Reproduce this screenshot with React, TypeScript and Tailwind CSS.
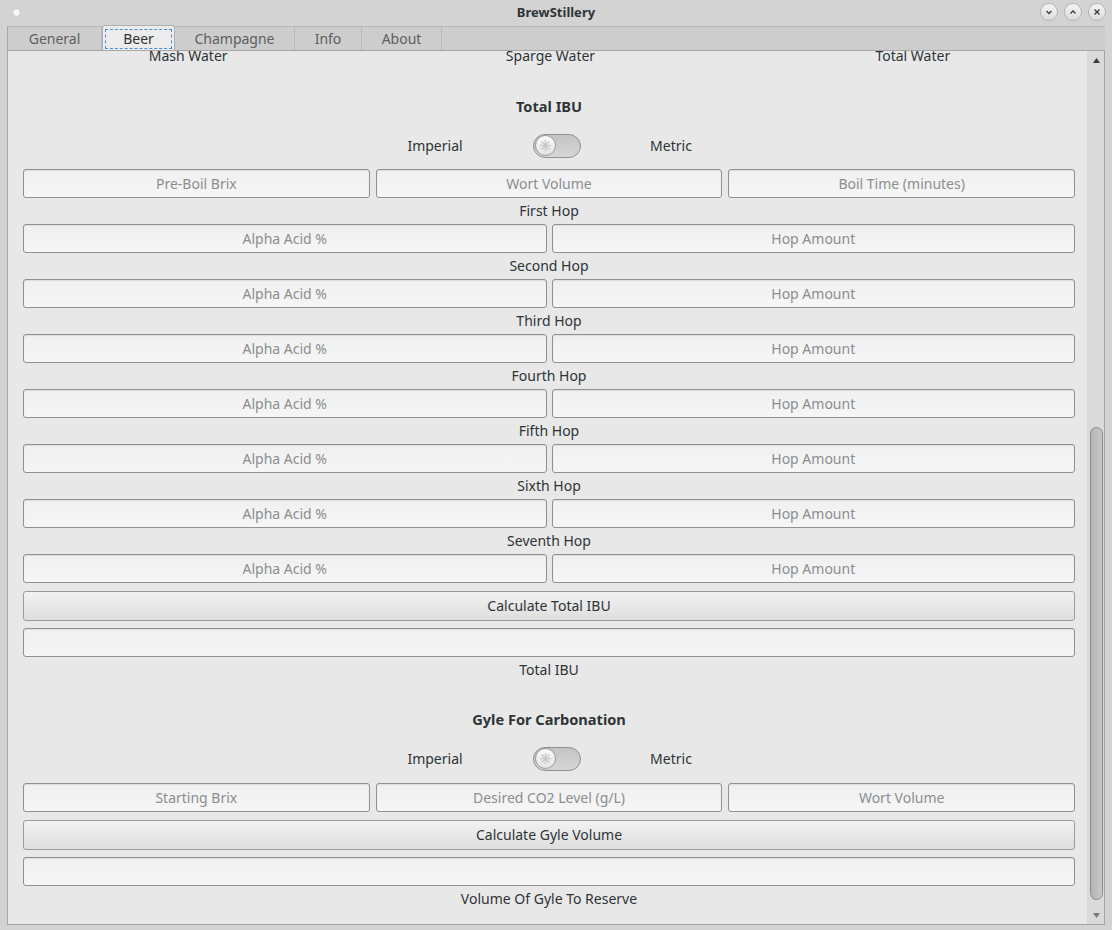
import React from "react";

const hops = ["First", "Second", "Third", "Fourth", "Fifth", "Sixth", "Seventh"];

function Entry({ placeholder }: { placeholder?: string }) {
  return (
    <div className="flex h-[29px] flex-1 items-center justify-center rounded-[3px] border border-[#8f9191] bg-gradient-to-b from-[#f0f0f0] to-[#f6f6f6] text-[14px] text-[#8b8e8f] shadow-[inset_0_1px_1px_rgba(0,0,0,0.08)]">
      {placeholder}
    </div>
  );
}

function Button({ label }: { label: string }) {
  return (
    <div className="flex h-[30px] items-center justify-center rounded-[3px] border border-[#9a9c9c] bg-gradient-to-b from-[#f2f2f2] to-[#dedede] text-[14px] text-[#2e3436]">
      {label}
    </div>
  );
}

function Switch() {
  return (
    <div className="flex h-[24px] w-[48px] items-center rounded-full border border-[#8f9191] bg-gradient-to-b from-[#c4c4c4] to-[#d6d6d6] px-[1px]">
      <div className="flex h-[21px] w-[21px] items-center justify-center rounded-full border border-[#9a9a9a] bg-gradient-to-b from-[#fafafa] to-[#e4e4e4]">
        <svg width="13" height="13" viewBox="0 0 13 13" stroke="#c8c8c8" strokeWidth="1.4">
          <line x1="6.5" y1="1" x2="6.5" y2="12" />
          <line x1="1" y1="6.5" x2="12" y2="6.5" />
          <line x1="2.6" y1="2.6" x2="10.4" y2="10.4" />
          <line x1="10.4" y1="2.6" x2="2.6" y2="10.4" />
        </svg>
      </div>
    </div>
  );
}

function UnitRow() {
  return (
    <div className="ml-[362px] flex h-[24px] items-center text-[14px] text-[#2e3436]">
      <span className="w-[100px] text-center">Imperial</span>
      <div className="ml-[48px]">
        <Switch />
      </div>
      <span className="ml-[40px] w-[100px] text-center">Metric</span>
    </div>
  );
}

function WinButton({ children }: { children: React.ReactNode }) {
  return (
    <div className="flex h-[18px] w-[18px] items-center justify-center rounded-full border border-[#b4b4b4] bg-gradient-to-b from-[#f4f4f4] to-[#dcdcdc]">
      {children}
    </div>
  );
}

export default function App() {
  const tabs = [
    { label: "General", w: 94 },
    { label: "Beer", w: 73 },
    { label: "Champagne", w: 120 },
    { label: "Info", w: 67 },
    { label: "About", w: 80 },
  ];

  return (
    <div
      className="flex h-[930px] w-[1112px] flex-col bg-[#d3d3d3] text-[#2e3436]"
      style={{ fontFamily: '"Noto Sans", "DejaVu Sans", sans-serif' }}
    >
      {/* Title bar */}
      <div className="relative flex h-[26px] items-center justify-center">
        <div className="absolute left-[13px] top-[9px] h-[7px] w-[7px] rounded-full bg-[#f6f6f6] shadow-[0_0_1px_rgba(0,0,0,0.3)]" />
        <span className="text-[13px] font-bold text-[#2e3436]">BrewStillery</span>
        <div className="absolute right-[6px] top-[3px] flex gap-[6px]">
          <WinButton>
            <svg width="8" height="8" viewBox="0 0 8 8" fill="none" stroke="#3a3a3a" strokeWidth="1.3">
              <path d="M1.5 3 L4 5.5 L6.5 3" />
            </svg>
          </WinButton>
          <WinButton>
            <svg width="8" height="8" viewBox="0 0 8 8" fill="none" stroke="#3a3a3a" strokeWidth="1.3">
              <path d="M1.5 5.5 L4 3 L6.5 5.5" />
            </svg>
          </WinButton>
          <WinButton>
            <svg width="8" height="8" viewBox="0 0 8 8" fill="none" stroke="#3a3a3a" strokeWidth="1.3">
              <path d="M1.5 1.5 L6.5 6.5 M6.5 1.5 L1.5 6.5" />
            </svg>
          </WinButton>
        </div>
      </div>

      {/* Window body */}
      <div className="mx-[7px] flex flex-1 flex-col border-l border-[#a8a8a8]">
        {/* Tabs */}
        <div className="flex h-[25px] items-end border-b border-[#a6a6a6] bg-[#d3d3d3]">
          {tabs.map((t) => (
            <div
              key={t.label}
              style={{ width: t.w }}
              className={
                t.label === "Beer"
                  ? "flex h-[25px] items-center justify-center rounded-t-[3px] border border-b-0 border-[#b0b0b0] bg-[#ececec] px-[2px] pt-[1px]"
                  : "flex h-[24px] items-center justify-center border-r border-t border-[#b8b8b8] bg-[#cdcdcd] text-[14px] text-[#5c6163]"
              }
            >
              {t.label === "Beer" ? (
                <div className="flex h-[20px] w-full items-center justify-center border border-dashed border-[#4a90d9] text-[14px] text-[#2e3436]">
                  Beer
                </div>
              ) : (
                t.label
              )}
            </div>
          ))}
          <div className="h-[24px] flex-1 border-t border-[#b8b8b8] bg-[#cdcdcd]" />
        </div>

        {/* Content with scrollbar */}
        <div className="flex flex-1 overflow-hidden border-b border-r border-[#a6a6a6] bg-[#e8e8e8]">
          <div className="flex flex-1 flex-col overflow-hidden pl-[15px] pr-[12px] text-[14px]">
            <div className="-ml-[16px] -mt-[6px] grid w-[1087px] grid-cols-3 text-center">
              <span>Mash Water</span>
              <span>Sparge Water</span>
              <span>Total Water</span>
            </div>

            <div className="mt-[30px] text-center text-[14.6px] font-bold">Total IBU</div>
            <div className="mt-[16px]">
              <UnitRow />
            </div>
            <div className="mt-[11px] flex gap-[6px]">
              <Entry placeholder="Pre-Boil Brix" />
              <Entry placeholder="Wort Volume" />
              <Entry placeholder="Boil Time (minutes)" />
            </div>

            {hops.map((h) => (
              <div key={h} className="flex flex-col">
                <div className="mt-[4px] h-[18px] text-center leading-[18px]">{h} Hop</div>
                <div className="mt-[4px] flex gap-[5px]">
                  <Entry placeholder="Alpha Acid %" />
                  <Entry placeholder="Hop Amount" />
                </div>
              </div>
            ))}

            <div className="mt-[8px]">
              <Button label="Calculate Total IBU" />
            </div>
            <div className="mt-[7px] flex">
              <Entry />
            </div>
            <div className="mt-[2px] text-center">Total IBU</div>

            <div className="mt-[29px] text-center text-[14.6px] font-bold">Gyle For Carbonation</div>
            <div className="mt-[16px]">
              <UnitRow />
            </div>
            <div className="mt-[12px] flex gap-[6px]">
              <Entry placeholder="Starting Brix" />
              <Entry placeholder="Desired CO2 Level (g/L)" />
              <Entry placeholder="Wort Volume" />
            </div>
            <div className="mt-[8px]">
              <Button label="Calculate Gyle Volume" />
            </div>
            <div className="mt-[7px] flex">
              <Entry />
            </div>
            <div className="mt-[2px] text-center">Volume Of Gyle To Reserve</div>
          </div>

          {/* Scrollbar */}
          <div className="flex w-[17px] flex-col items-center border-l border-[#d8d8d8] bg-[#dadada]">
            <div className="flex h-[18px] items-center justify-center">
              <svg width="7" height="5" viewBox="0 0 7 5">
                <path d="M0 5 L3.5 0 L7 5 Z" fill="#3a3a3a" />
              </svg>
            </div>
            <div className="mt-[358px] h-[473px] w-[13px] rounded-full border border-[#8a8a8a] bg-gradient-to-r from-[#b4b4b4] to-[#c8c8c8]" />
            <div className="mt-[8px] flex h-[14px] items-center justify-center">
              <svg width="7" height="5" viewBox="0 0 7 5">
                <path d="M0 0 L3.5 5 L7 0 Z" fill="#7a7a7a" />
              </svg>
            </div>
          </div>
        </div>
      </div>
      <div className="h-[5px]" />
    </div>
  );
}
